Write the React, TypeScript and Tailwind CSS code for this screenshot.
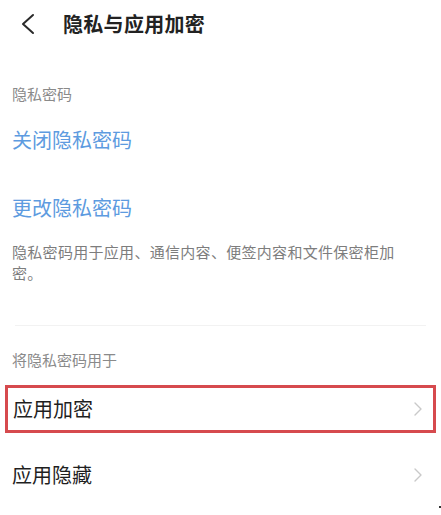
import React from "react";

const Chevron = () => (
  <svg width="10" height="16" viewBox="0 0 10 16" fill="none">
    <path d="M2 2 L8 8 L2 14" stroke="#c9c9c9" strokeWidth="1.4" strokeLinecap="round" strokeLinejoin="round" />
  </svg>
);

export default function App() {
  const font = { fontFamily: '"Noto Sans CJK SC", "Noto Sans", sans-serif' };
  return (
    <div className="relative w-[441px] h-[515px] bg-white overflow-hidden" style={font}>
      <div className="h-[48px] flex items-center">
        <svg className="ml-[19px]" width="18" height="22" viewBox="0 0 18 22" fill="none">
          <path d="M14 2 L4 11 L14 20" stroke="#2a2a2a" strokeWidth="2" strokeLinecap="round" strokeLinejoin="round" />
        </svg>
        <div className="ml-[26px] text-[20px] leading-[20px] font-bold text-[#222] tracking-[0.3px]">隐私与应用加密</div>
      </div>
      <div className="mt-[34px] pl-[12px] h-[24px] leading-[24px] text-[15px] text-[#8a8a8a]">隐私密码</div>
      <div className="pl-[12px] h-[68px] flex items-center text-[20px] text-[#5d9be0]">关闭隐私密码</div>
      <div className="pl-[12px] h-[67px] flex items-center text-[20px] text-[#5d9be0]">更改隐私密码</div>
      <div className="pl-[12px] w-[412px] text-[15px] leading-[21px] text-[#7d7d7d] tracking-[0.3px]">
        隐私密码用于应用、通信内容、便签内容和文件保密柜加密。
      </div>
      <div className="mt-[42px] mx-[15px] h-px bg-[#f2f2f2]" />
      <div className="mt-[22px] pl-[12px] h-[24px] leading-[24px] text-[15px] text-[#8a8a8a]">将隐私密码用于</div>
      <div className="mt-[13px] mx-[5px] h-[48px] border-[3px] border-[#d64a4e] flex items-center justify-between pl-[5px] pr-[10px]">
        <span className="text-[20px] text-[#1f1f1f]">应用加密</span>
        <Chevron />
      </div>
      <div className="mt-[18px] h-[48px] flex items-center justify-between pl-[12px] pr-[18px]">
        <span className="text-[20px] text-[#1f1f1f]">应用隐藏</span>
        <Chevron />
      </div>
      <div className="absolute left-[439px] top-[506px] w-[2px] h-[2px] bg-[#333]" />
    </div>
  );
}
